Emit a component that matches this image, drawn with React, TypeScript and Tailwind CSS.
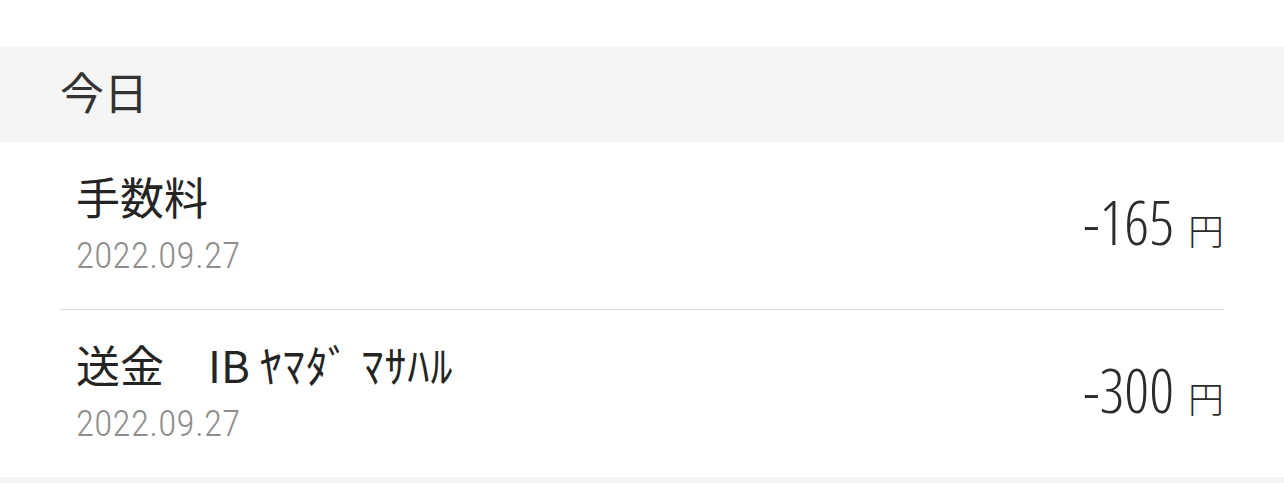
import type { ReactNode } from "react";

const jp = "font-['Noto_Sans_CJK_JP',sans-serif]";

const items: { title: ReactNode; date: string; amount: string }[] = [
  { title: "手数料", date: "2022.09.27", amount: "-165" },
  {
    title: (
      <>
        送金　IB <span className="tracking-[1px]">ﾔﾏﾀﾞ ﾏｻﾊﾙ</span>
      </>
    ),
    date: "2022.09.27",
    amount: "-300",
  },
];

function Row({ title, date, amount }: { title: ReactNode; date: string; amount: string }) {
  return (
    <div className="flex h-[167px] items-center justify-between pl-4">
      <div className="flex flex-col">
        <div className={`${jp} text-[44px] leading-[48px] text-[#242424]`}>{title}</div>
        <div className="mt-[12px] font-['Roboto_Condensed',sans-serif] font-light text-[37px] leading-[48px] tracking-[0.3px] text-[#8e8e8e]">
          {date}
        </div>
      </div>
      <div className="mb-[8px] flex items-baseline gap-[14px] text-[#2b2b2b]">
        <span className="font-['Open_Sans',sans-serif] font-stretch-condensed font-light text-[61px] leading-none">
          {amount}
        </span>
        <span className={`${jp} font-light text-[36px] leading-none`}>円</span>
      </div>
    </div>
  );
}

export default function App() {
  return (
    <div className="h-[483px] w-full bg-white">
      <div className="h-[46px]" />
      <div className={`${jp} flex h-[96px] items-center bg-[#f5f5f5] pb-[6px] pl-[60px] text-[44px] text-[#333]`}>
        今日
      </div>
      <div className="px-[60px]">
        {items.map((item, i) => (
          <div key={i}>
            {i > 0 && <div className="h-px bg-[#dcdcdc]" />}
            <Row {...item} />
          </div>
        ))}
      </div>
      <div className="h-[20px] bg-[#f5f5f5]" />
    </div>
  );
}
